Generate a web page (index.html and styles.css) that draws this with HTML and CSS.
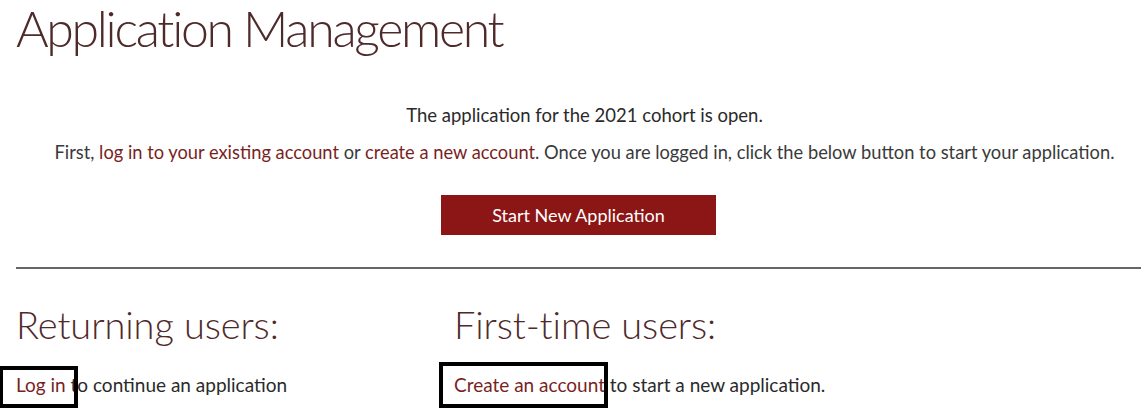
FILE: index.html
```html
<!DOCTYPE html>
<html lang="en">
<head>
<meta charset="utf-8">
<title>Application Management</title>
<link rel="stylesheet" href="styles.css">
</head>
<body>
<main class="page">
  <h1 class="title">Application Management</h1>
  <section class="intro">
    <p class="status">The application for the 2021 cohort is open.</p>
    <p class="instructions">First, <a href="#" class="link">log in to your existing account</a> or <a href="#" class="link">create a new account</a>. Once you are logged in, click the below button to start your application.</p>
    <div class="action"><a href="#" class="btn">Start New Application</a></div>
  </section>
  <hr class="divider">
  <section class="columns">
    <div class="col">
      <h2 class="subhead">Returning users:</h2>
      <p class="line"><a href="#" class="link boxed boxed-login">Log in</a> to continue an application</p>
    </div>
    <div class="col">
      <h2 class="subhead">First-time users:</h2>
      <p class="line"><a href="#" class="link boxed boxed-create">Create an account</a> to start a new application.</p>
    </div>
  </section>
</main>
</body>
</html>
```
FILE: styles.css
```css
html, body {
  margin: 0;
  padding: 0;
  background: #ffffff;
}
body {
  font-family: Lato, "Open Sans", "Liberation Sans", sans-serif;
  color: #333333;
}
.page {
  padding: 0 0 24px 16px;
  overflow-x: clip;
}
.title {
  margin: 0;
  padding-top: 4px;
  font-weight: 300;
  font-size: 50px;
  line-height: 48px;
  color: #4f2a2a;
  letter-spacing: -2.3px;
  white-space: nowrap;
}
.intro {
  text-align: center;
  padding-top: 50px;
  margin-right: -12px;
}
.status {
  margin: 0;
  font-size: 18.5px;
  line-height: 26px;
  color: #2a2a2a;
}
.instructions {
  margin: 11px 0 0;
  font-size: 18.3px;
  line-height: 26px;
  color: #3a3a3a;
  white-space: nowrap;
}
.link {
  color: #7a1f1f;
  text-decoration: none;
}
.action {
  margin-top: 30px;
  display: flex;
  justify-content: center;
  padding-right: 12px;
}
.btn {
  display: inline-block;
  background: #8c1515;
  color: #ffffff;
  text-decoration: none;
  font-size: 18px;
  line-height: 40px;
  width: 275px;
  text-align: center;
}
.divider {
  margin: 32px 0 0;
  border: 0;
  border-top: 2px solid #666666;
  height: 0;
}
.columns {
  display: grid;
  grid-template-columns: 438px 1fr;
  padding-top: 33px;
}
.subhead {
  margin: 0;
  font-weight: 300;
  font-size: 38px;
  line-height: 44px;
  color: #4f2a2a;
  letter-spacing: -0.1px;
  white-space: nowrap;
}
.line {
  margin: 26px 0 0;
  font-size: 19px;
  line-height: 26px;
  color: #2a2a2a;
}
.boxed {
  position: relative;
  display: inline-block;
}
.boxed::after {
  content: "";
  position: absolute;
  border: 4px solid #000000;
  box-sizing: border-box;
}
.boxed-login::after {
  left: -17px;
  right: -12px;
  top: -6px;
  bottom: -10px;
}
.boxed-create::after {
  left: -15px;
  right: -3px;
  top: -10px;
  bottom: -10px;
}
```
